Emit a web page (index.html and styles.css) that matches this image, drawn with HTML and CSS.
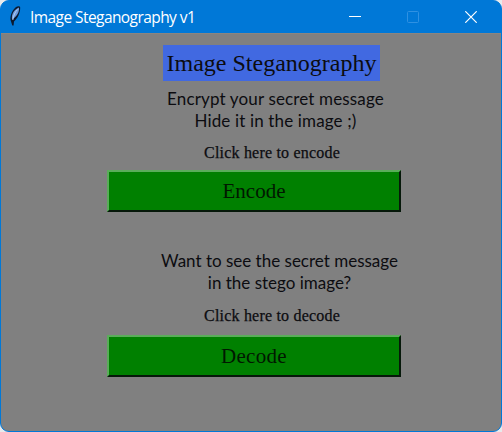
FILE: index.html
```html
<!DOCTYPE html>
<html lang="en">
<head>
<meta charset="utf-8">
<title>Image Steganography v1</title>
<link rel="stylesheet" href="styles.css">
</head>
<body>
<div class="window">
  <header class="titlebar">
    <svg class="feather" width="14" height="22" viewBox="0 0 14 22">
      <path d="M4.300 20.500 3 16.500C1.500 13 3 6 8 2 10 .8 12 1 12.200 2.500 12.300 8 9.500 13.500 6 16.500L5.600 20.500Z" fill="#0b1a30"/>
      <path d="M4 14.500C3.300 9.500 5.500 5 11 2.500 11.500 7 9 11.500 4 14.500Z" fill="#6e9bdc"/>
      <path d="M9.500 4.500C7 7 5.500 10.500 4.800 15" fill="none" stroke="#b5cdf0" stroke-width="1"/>
    </svg>
    <span class="caption">Image Steganography v1</span>
    <div class="controls">
      <svg width="12" height="12" viewBox="0 0 12 12"><path d="M0 5.500H12" stroke="#fff"/></svg>
      <svg width="12" height="12" viewBox="0 0 12 12"><rect x=".5" y=".5" width="11" height="11" rx="1" fill="none" stroke="#2f91e2"/></svg>
      <svg width="12" height="12" viewBox="0 0 12 12"><path d="M.3.3 11.700 11.700M11.700.3.3 11.700" stroke="#fff" stroke-width="1.200"/></svg>
    </div>
  </header>
  <main class="content">
    <h1 class="title">Image Steganography</h1>
    <p class="note note-encode"><span>Encrypt your secret message</span><span>Hide it in the image ;)</span></p>
    <p class="hint">Click here to encode</p>
    <button class="action">Encode</button>
    <p class="note note-decode"><span>Want to see the secret message</span><span>in the stego image?</span></p>
    <p class="hint hint-decode">Click here to decode</p>
    <button class="action action-decode">Decode</button>
  </main>
</div>
</body>
</html>
```
FILE: styles.css
```css
* { box-sizing: border-box; }
body { margin: 0; background: #e8eaec; overflow: hidden; }
.window {
  width: 502px; height: 432px;
  display: flex; flex-direction: column;
  background: #0078d7;
  border: 1px solid #0078d7;
  border-radius: 9px;
  overflow: hidden;
}
.titlebar {
  height: 32px; flex: none;
  display: flex; align-items: center;
  padding-left: 7px;
  color: #fff;
}
.feather { margin-right: 8px; margin-top: -2px; }
.caption { margin-top: -1px; font: 15.5px/20px "Open Sans", sans-serif; letter-spacing: -0.57px; white-space: nowrap; }
.controls { margin-left: auto; display: flex; gap: 46px; padding-right: 24px; }
.content {
  flex: 1;
  display: flex; flex-direction: column; align-items: center;
  padding: 11px 0 0 6px;
  background: #808080;
  border-top: 1px solid #8b8580;
  color: #0c0c10;
}
.title {
  margin: 0 0 0 35px; width: 217px; height: 36px;
  background: #4169e1;
  font: 24px/36px "Liberation Serif", serif;
  text-align: center; white-space: nowrap;
}
.note {
  margin: 7px 0 0 43px;
  display: flex; flex-direction: column; align-items: center;
  font: 17px/22px "Comic Sans MS", Lato, sans-serif;
  white-space: nowrap;
}
.note-encode { letter-spacing: 0.15px; }
.hint {
  margin: 11px 0 0 36px;
  font: 16px/20px "Liberation Serif", serif;
  letter-spacing: 0.2px;
  -webkit-text-stroke: 0.25px #0c0c10;
  white-space: nowrap;
}
.action {
  width: 294px; height: 42px; margin: 7px 0 0; padding: 0;
  background: #008000;
  border: 2px solid; border-color: #5aad5a #06180a #06180a #5aad5a;
  color: #001800;
  font: 21px/36px "Liberation Serif", serif;
}
.note-decode { margin: 38px 0 0 51px; }
.hint-decode { margin-top: 12px; }
.action-decode { margin-top: 9px; letter-spacing: 0.3px; }
```
